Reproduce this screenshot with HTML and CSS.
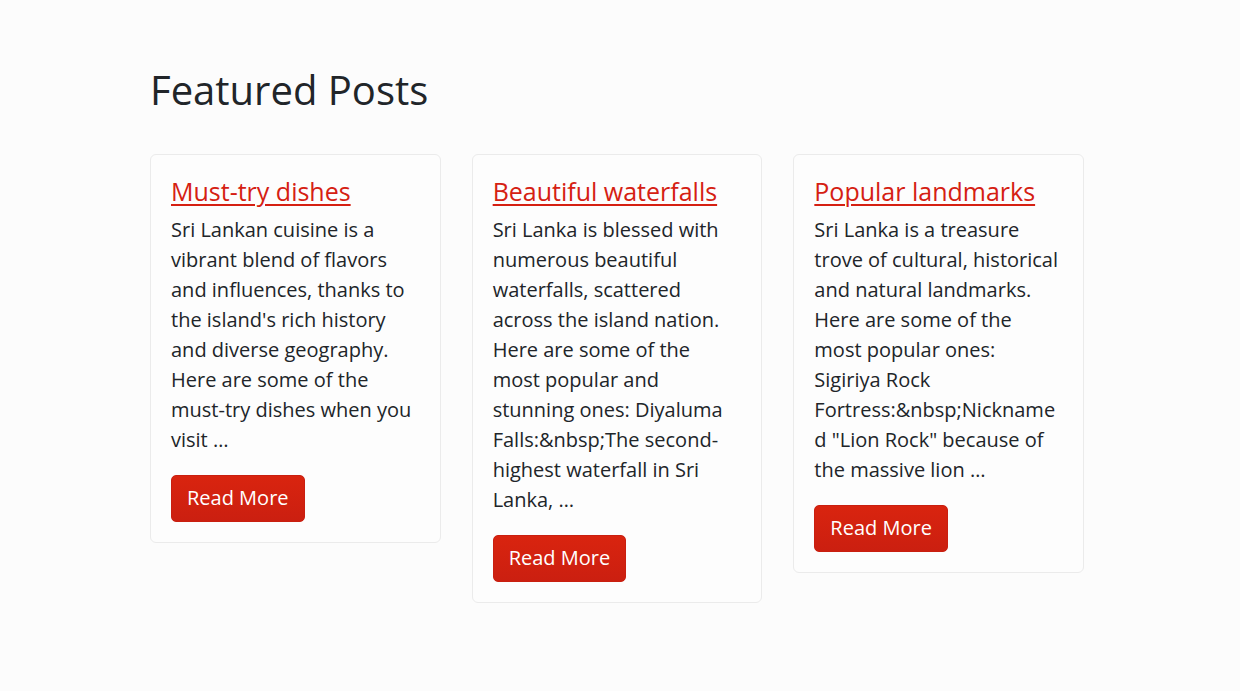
FILE: index.html
```html
<!DOCTYPE html>
<html lang="en">
<head>
<meta charset="utf-8">
<title>Featured Posts</title>
<link rel="stylesheet" href="styles.css">
</head>
<body>
<main class="container">
  <h1 class="page-title">Featured Posts</h1>
  <div class="posts">
    <article class="card">
      <h4 class="card-title"><a href="#">Must-try dishes</a></h4>
      <p class="card-text">Sri Lankan cuisine is a vibrant blend of flavors and influences, thanks to the island's rich history and diverse geography. Here are some of the must-try dishes when you visit …</p>
      <a class="btn" href="#">Read More</a>
    </article>
    <article class="card">
      <h4 class="card-title"><a href="#">Beautiful waterfalls</a></h4>
      <p class="card-text">Sri Lanka is blessed with numerous beautiful waterfalls, scattered across the island nation. Here are some of the most popular and stunning ones: Diyaluma Falls:&amp;nbsp;The second-highest waterfall in Sri Lanka, …</p>
      <a class="btn" href="#">Read More</a>
    </article>
    <article class="card">
      <h4 class="card-title"><a href="#">Popular landmarks</a></h4>
      <p class="card-text">Sri Lanka is a treasure trove of cultural, historical and natural landmarks. Here are some of the most popular ones: Sigiriya Rock Fortress:&amp;nbsp;Nicknamed "Lion Rock" because of the massive lion …</p>
      <a class="btn" href="#">Read More</a>
    </article>
  </div>
</main>
</body>
</html>
```
FILE: styles.css
```css
html, body {
  margin: 0;
  padding: 0;
  background: #fcfcfc;
}
body {
  font-family: "Open Sans", "Liberation Sans", sans-serif;
  color: #212529;
  font-size: 20px;
  line-height: 1.5;
}
.container {
  width: 934px;
  margin-left: 150px;
  padding-top: 66px;
}
.page-title {
  font-size: 40px;
  font-weight: 400;
  line-height: 1.2;
  margin: 0 0 40px 0;
}
.posts {
  display: grid;
  grid-template-columns: repeat(3, minmax(0, 1fr));
  column-gap: 31px;
  align-items: start;
}
.card {
  min-width: 0;
  border: 1px solid #ebebeb;
  border-radius: 6px;
  padding: 20px;
  background: #fdfdfd;
}
.card-title {
  font-size: 25px;
  font-weight: 400;
  line-height: 32px;
  margin: 0 0 8px 0;
}
.card-title a {
  color: #d52012;
  text-decoration: underline;
  text-decoration-thickness: 2px;
  text-underline-offset: 3px;
}
.card-text {
  margin: 0 0 20px 0;
  overflow-wrap: break-word;
}
.btn {
  display: inline-block;
  color: #fff;
  text-decoration: none;
  font-size: 20px;
  line-height: 30px;
  padding: 7px 15px 8px;
  border: 1px solid #c91f10;
  border-radius: 5px;
  background: linear-gradient(#d9240f, #cb1f10);
}
```
